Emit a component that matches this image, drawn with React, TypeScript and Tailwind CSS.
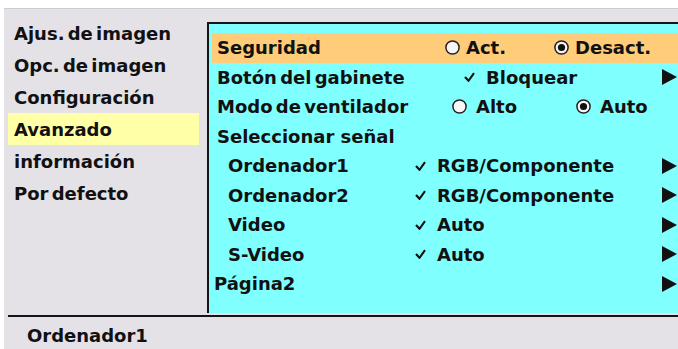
import React from "react";

const font = { fontFamily: '"DejaVu Sans", "Verdana", sans-serif' };

function Radio({ on }: { on?: boolean }) {
  return (
    <svg width="15" height="15" viewBox="0 0 15 15" className="shrink-0 w-[15px] h-[15px]">
      <circle cx="7.5" cy="7.5" r="6.6" fill="#f6f6f6" stroke="#222" strokeWidth="1.5" />
      {on && <circle cx="7.5" cy="7.5" r="3.6" fill="#111" />}
    </svg>
  );
}

function Check() {
  return (
    <svg width="11" height="10" viewBox="0 0 11 10" className="shrink-0 w-[11px] h-[10px]">
      <path d="M1 5 L4.5 8.8 L10 1.2" fill="none" stroke="#111" strokeWidth="2.1" />
    </svg>
  );
}

function Arrow() {
  return (
    <svg width="15" height="16" viewBox="0 0 15 16" className="shrink-0 ml-auto mr-[1px] w-[15px] h-[16px]">
      <path d="M0 0 L15 8 L0 16 Z" fill="#111" />
    </svg>
  );
}

const rowCls = "flex items-center h-[29.5px] whitespace-nowrap";

export default function App() {
  const leftItems = [
    "Ajus. de imagen",
    "Opc. de imagen",
    "Configuración",
    "Avanzado",
    "información",
    "Por defecto",
  ];
  const subRows = [
    ["Ordenador1", "RGB/Componente"],
    ["Ordenador2", "RGB/Componente"],
    ["Video", "Auto"],
    ["S-Video", "Auto"],
  ];
  return (
    <div
      className="w-[678px] h-[349px] bg-white pt-[8px] pl-[4px] flex flex-col text-[18px] font-bold text-[#111] overflow-hidden"
      style={font}
    >
      <div className="flex-1 flex flex-col bg-[#e4e1e7] border-t border-[#cdcad0]">
        <div className="h-[306px] flex">
          <div className="w-[203px] shrink-0 pt-[8px] pl-[4px]">
            {leftItems.map((t, i) => (
              <div
                key={t}
                className={
                  i === 3
                    ? "h-[32px] flex items-center pl-[6px] w-[191px] bg-[#ffffa8] whitespace-nowrap"
                    : "h-[32px] flex items-center pl-[6px] whitespace-nowrap [word-spacing:-3px]"
                }
              >
                {t}
              </div>
            ))}
          </div>
          <div className="flex-1 mt-[13px] h-[291px] border-t-2 border-l-2 border-[#151515] bg-[#80ffff] pt-[9px] pl-[3px]">
            <div className={rowCls + " bg-[#ffcc7a] pl-[5px]"}>
              <span className="w-[228px] shrink-0">Seguridad</span>
              <span className="w-[109px] shrink-0 flex items-center gap-[6px]">
                <Radio />
                Act.
              </span>
              <span className="flex items-center gap-[6px]">
                <Radio on />
                Desact.
              </span>
            </div>
            <div className={rowCls + " pl-[5px]"}>
              <span className="w-[247px] shrink-0 [word-spacing:-3px]">Botón del gabinete</span>
              <span className="flex items-center gap-[11px]">
                <Check />
                Bloquear
              </span>
              <Arrow />
            </div>
            <div className={rowCls + " pl-[5px]"}>
              <span className="w-[235px] shrink-0 [word-spacing:-3px]">Modo de ventilador</span>
              <span className="w-[124px] shrink-0 flex items-center gap-[9px]">
                <Radio />
                Alto
              </span>
              <span className="flex items-center gap-[9px]">
                <Radio on />
                Auto
              </span>
            </div>
            <div className={rowCls + " pl-[5px]"}>Seleccionar señal</div>
            {subRows.map(([a, b]) => (
              <div key={a} className={rowCls + " pl-[16px]"}>
                <span className="w-[187px] shrink-0">{a}</span>
                <span className="flex items-center gap-[11px]">
                  <Check />
                  {b}
                </span>
                <Arrow />
              </div>
            ))}
            <div className={rowCls + " pl-[2px]"}>
              Página2
              <Arrow />
            </div>
          </div>
        </div>
        <div className="h-[2px] bg-[#151515] ml-[4px]" />
        <div className="flex-1 flex items-center pl-[23px] pt-[4px] font-semibold whitespace-nowrap">
          Ordenador1
        </div>
      </div>
    </div>
  );
}
